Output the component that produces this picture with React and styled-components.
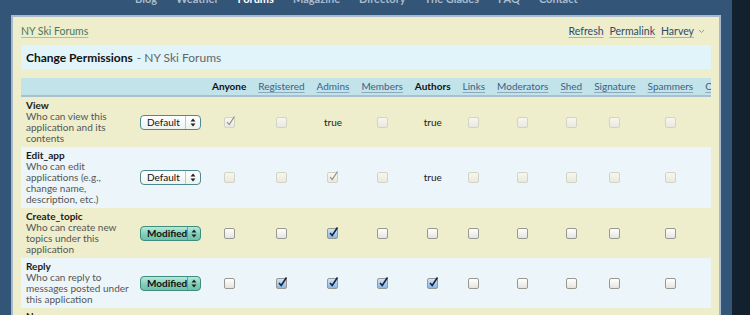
import styled, { createGlobalStyle } from "styled-components";

const GlobalStyle = createGlobalStyle`
  body {
    margin: 0;
    background: #13212f;
    font-family: Lato, "Liberation Sans", sans-serif;
    overflow: hidden;
  }
`;

const navItems = [
  { label: "Blog" },
  { label: "Weather" },
  { label: "Forums", active: true },
  { label: "Magazine" },
  { label: "Directory" },
  { label: "The Glades" },
  { label: "FAQ" },
  { label: "Contact" },
];

const roles = [
  { name: "Anyone", plain: true },
  { name: "Registered" },
  { name: "Admins" },
  { name: "Members" },
  { name: "Authors", plain: true },
  { name: "Links" },
  { name: "Moderators" },
  { name: "Shed" },
  { name: "Signature" },
  { name: "Spammers" },
  { name: "Owners" },
  { name: "Staff" },
];

// cell codes: 0 = empty box, 1 = checked box, "t" = true text
const permissions = [
  {
    name: "View",
    desc: "Who can view this application and its contents",
    mode: "Default",
    locked: true,
    cells: [1, 0, "t", 0, "t", 0, 0, 0, 0, 0, 0, 0],
  },
  {
    name: "Edit_app",
    desc: "Who can edit applications (e.g., change name, description, etc.)",
    mode: "Default",
    locked: true,
    cells: [0, 0, 1, 0, "t", 0, 0, 0, 0, 0, 0, 0],
  },
  {
    name: "Create_topic",
    desc: "Who can create new topics under this application",
    mode: "Modified",
    cells: [0, 0, 1, 0, 0, 0, 0, 0, 0, 0, 0, 0],
  },
  {
    name: "Reply",
    desc: "Who can reply to messages posted under this application",
    mode: "Modified",
    cells: [0, 1, 1, 1, 1, 0, 0, 0, 0, 0, 0, 0],
  },
  {
    name: "Name",
    desc: "Who can rename topics under this application",
    mode: "Default",
    locked: true,
    cells: [0, 0, "t", 0, "t", 0, 0, 0, 0, 0, 0, 0],
  },
];

const Page = styled.div`
  width: 732px;
  min-height: 100vh;
  background: #335577;
  box-sizing: border-box;
  padding: 0 11px;
`;

const Nav = styled.nav`
  height: 15px;
  display: flex;
  align-items: flex-start;
  gap: 19px;
  padding-left: 124px;
  overflow: hidden;
`;

const NavItem = styled.span`
  margin-top: -7px;
  font-size: 11px;
  line-height: 11px;
  font-weight: 700;
  color: ${(p) => (p.$active ? "#ffffff" : "#a9bccd")};
`;

const Panel = styled.div`
  border: 2px solid #a9b9c9;
  background: #eeedcc;
  padding: 6px 8px 0;
`;

const TopBar = styled.div`
  height: 16px;
  display: flex;
  align-items: center;
  justify-content: space-between;
  font-size: 10.5px;
`;

const Crumb = styled.a`
  color: #477a5a;
  text-decoration: underline;
  text-decoration-color: #a9bfae;
  text-underline-offset: 2px;
`;

const Tools = styled.div`
  display: flex;
  align-items: center;
  gap: 6px;
  padding-right: 6px;
`;

const ToolLink = styled.a`
  color: #2c4b6c;
  text-decoration: underline;
  text-decoration-color: #9eb2c4;
  text-underline-offset: 2px;
  display: inline-flex;
  align-items: center;
  gap: 4px;
`;

const TitleBand = styled.div`
  margin-top: 6px;
  height: 24px;
  display: flex;
  align-items: center;
  padding-left: 5px;
  background: #e1f4f9;
  font-size: 12px;
  color: #111;
`;

const TitleMain = styled.span`
  font-weight: 700;
`;

const TitleSub = styled.span`
  color: #666;
  margin-left: 4px;
`;

const TableWrap = styled.div`
  margin-top: 9px;
  overflow: hidden;
`;

const Table = styled.table`
  border-collapse: collapse;
  font-size: 10px;
  line-height: 11px;
`;

const HeadRow = styled.tr`
  background: #c1e3e9;
  border-bottom: 2px solid #a8c1cc;
`;

const HeadCell = styled.th`
  height: 17px;
  padding: 0 6px;
  white-space: nowrap;
  font-weight: ${(p) => (p.$plain ? 700 : 400)};
  color: ${(p) => (p.$plain ? "#111" : "#3b5f86")};
  text-decoration: ${(p) => (p.$plain ? "none" : "underline")};
  text-decoration-color: #8fa9bc;
  text-underline-offset: 2px;
`;

const Row = styled.tr`
  background: ${(p) => (p.$alt ? "#ecf5f9" : "transparent")};
`;

const LabelCell = styled.td`
  padding: 3px 5px;
  vertical-align: top;
`;

const Label = styled.div`
  width: 104px;
`;

const PermName = styled.div`
  font-weight: 700;
  color: #1a1a1a;
`;

const PermDesc = styled.div`
  color: #555;
`;

const ModeCell = styled.td`
  padding: 0 5px;
  vertical-align: middle;
`;

const Select = styled.div`
  width: 61px;
  height: 15px;
  box-sizing: border-box;
  display: flex;
  align-items: stretch;
  border: 1px solid ${(p) => (p.$modified ? "#3e8d7e" : "#4b8a92")};
  border-radius: 4px;
  background: ${(p) =>
    p.$modified
      ? "linear-gradient(#b5ead8, #7fcdb5 60%, #6cc2a8)"
      : "linear-gradient(#ffffff, #eef3ef)"};
  font-size: 10px;
  font-weight: ${(p) => (p.$modified ? 700 : 400)};
  color: #111;
`;

const SelectText = styled.span`
  flex: 1;
  display: flex;
  align-items: center;
  padding-left: 6px;
`;

const SelectArrows = styled.span`
  width: 14px;
  display: flex;
  align-items: center;
  justify-content: center;
  border-left: 1px solid ${(p) => (p.$modified ? "#5aa893" : "#b9c9c9")};
`;

const ValueCell = styled.td`
  text-align: center;
  vertical-align: middle;
  color: #222;
`;

const Box = styled.span`
  position: relative;
  display: inline-block;
  width: 9px;
  height: 9px;
  vertical-align: middle;
  border-radius: 2px;
  border: 1px solid ${(p) => (p.$locked ? "#d3d3c4" : "#989890")};
  background: ${(p) =>
    p.$locked
      ? "linear-gradient(#f7f7ef, #e9e9df)"
      : p.$checked
      ? "linear-gradient(#cfe4f7, #8bb8e4)"
      : "linear-gradient(#ffffff, #e4e4e0)"};

  svg {
    position: absolute;
    left: 0px;
    top: -3px;
  }
`;

const Chevron = () => (
  <svg width="7" height="5" viewBox="0 0 7 5">
    <path d="M1 1 L3.5 3.5 L6 1" fill="none" stroke="#8a9aa8" strokeWidth="1" />
  </svg>
);

const Arrows = () => (
  <svg width="6" height="9" viewBox="0 0 6 9">
    <path d="M3 0.5 L5.5 3.5 L0.5 3.5 Z M3 8.5 L5.5 5.5 L0.5 5.5 Z" fill="#222" />
  </svg>
);

const CheckBox = ({ checked, locked }) => (
  <Box $checked={checked} $locked={locked}>
    {checked && (
      <svg width="11" height="12" viewBox="0 0 11 12">
        <path
          d="M2 7 L4.2 9.5 L9.5 1.5"
          fill="none"
          stroke={locked ? "#8a8a84" : "#14233f"}
          strokeWidth={locked ? 1.1 : 1.6}
        />
      </svg>
    )}
  </Box>
);

const App = () => {
  return (
    <>
      <GlobalStyle />
      <Page>
        <Nav>
          {navItems.map((n) => (
            <NavItem key={n.label} $active={n.active}>
              {n.label}
            </NavItem>
          ))}
        </Nav>
        <Panel>
          <TopBar>
            <Crumb>NY Ski Forums</Crumb>
            <Tools>
              <ToolLink>Refresh</ToolLink>
              <ToolLink>Permalink</ToolLink>
              <ToolLink>
                Harvey
                <Chevron />
              </ToolLink>
            </Tools>
          </TopBar>
          <TitleBand>
            <TitleMain>Change Permissions</TitleMain>
            <TitleSub>- NY Ski Forums</TitleSub>
          </TitleBand>
          <TableWrap>
            <Table>
              <thead>
                <HeadRow>
                  <HeadCell />
                  <HeadCell />
                  {roles.map((r) => (
                    <HeadCell key={r.name} $plain={r.plain}>
                      {r.name}
                    </HeadCell>
                  ))}
                </HeadRow>
              </thead>
              <tbody>
                {permissions.map((p, i) => {
                  const modified = p.mode === "Modified";
                  return (
                    <Row key={p.name} $alt={i % 2 === 1}>
                      <LabelCell>
                        <Label>
                          <PermName>{p.name}</PermName>
                          <PermDesc>{p.desc}</PermDesc>
                        </Label>
                      </LabelCell>
                      <ModeCell>
                        <Select $modified={modified}>
                          <SelectText>{p.mode}</SelectText>
                          <SelectArrows $modified={modified}>
                            <Arrows />
                          </SelectArrows>
                        </Select>
                      </ModeCell>
                      {p.cells.map((c, j) => (
                        <ValueCell key={j}>
                          {c === "t" ? "true" : <CheckBox checked={c === 1} locked={p.locked} />}
                        </ValueCell>
                      ))}
                    </Row>
                  );
                })}
              </tbody>
            </Table>
          </TableWrap>
        </Panel>
      </Page>
    </>
  );
};

export default App;
